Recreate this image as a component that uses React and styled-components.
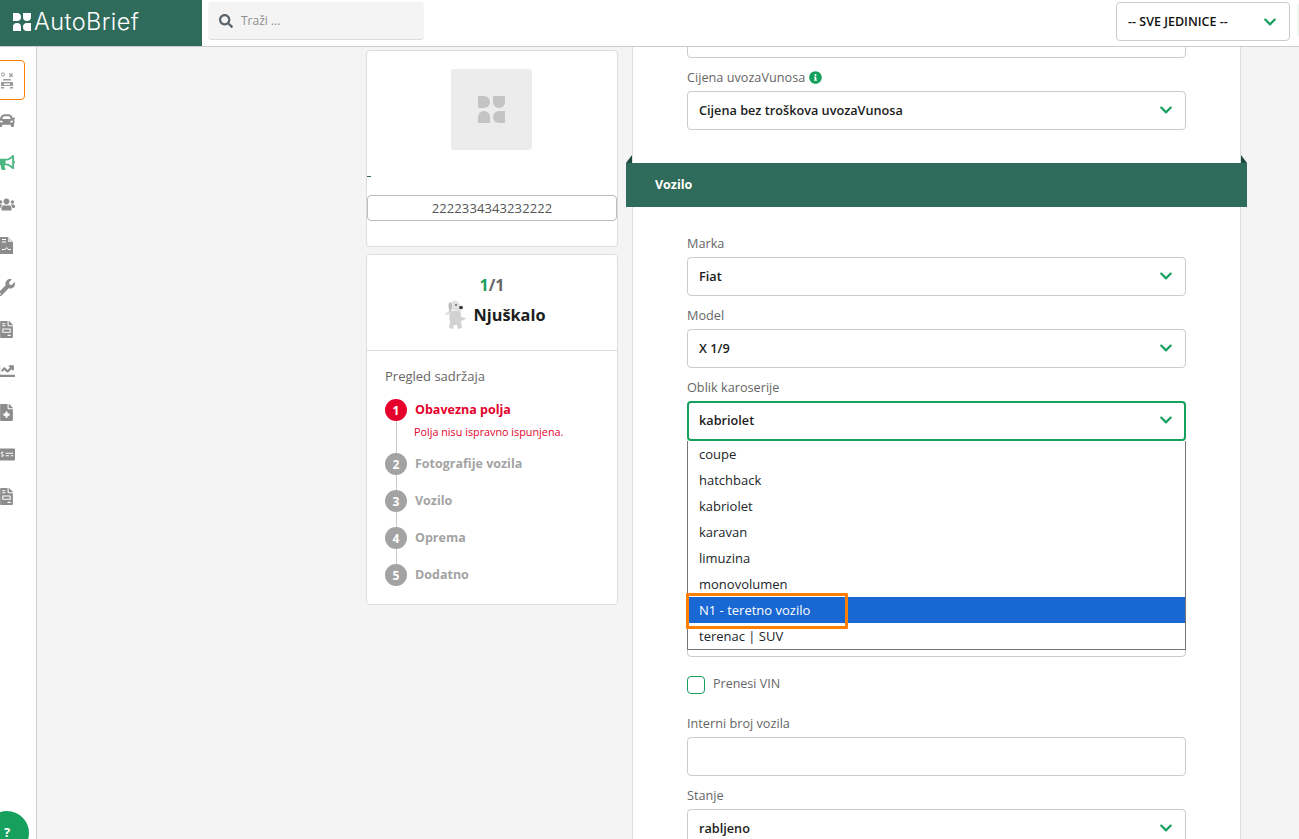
import React from 'react'
import styled, { createGlobalStyle } from 'styled-components'
import {
  FaSearch, FaChevronDown, FaCar, FaBullhorn, FaUsers, FaWrench,
  FaFileInvoice, FaChartLine, FaFileMedical, FaMoneyCheckAlt, FaInfoCircle,
} from 'react-icons/fa'

const GREEN = '#2f6b5a'
const ACCENT = '#16a05d'

const Global = createGlobalStyle`
  html, body { margin: 0; padding: 0; height: 100%; overflow: hidden; }
  body { font-family: "Open Sans", "Liberation Sans", sans-serif; font-size: 13px; color: #212529; background: #f4f4f4; }
  * { box-sizing: border-box; }
`

const Page = styled.div`
  width: 1299px;
  height: 839px;
  display: flex;
  flex-direction: column;
  overflow: hidden;
  position: relative;
`

const Header = styled.header`
  height: 47px;
  flex: none;
  display: flex;
  background: #fff;
  border-bottom: 1px solid #ccc;
`

const Logo = styled.div`
  width: 202px;
  padding: 0 0 3px 13px;
  display: flex;
  align-items: center;
  gap: 3px;
  background: ${GREEN};
  color: #fff;
  font-family: Inter, sans-serif;
  font-size: 23.5px;
  font-weight: 300;
  letter-spacing: 0.4px;
  line-height: 1;
`

const Search = styled.div`
  width: 216px;
  height: 38px;
  margin: 2px 0 0 6px;
  padding-left: 11px;
  display: flex;
  align-items: center;
  gap: 8px;
  background: #f4f4f4;
  border-bottom: 1px solid #ddd;
  border-radius: 4px;
  color: #8f8f8f;
  font-size: 12px;
  svg { color: #59636b; font-size: 14px; }
`

const Units = styled.div`
  width: 174px;
  height: 39px;
  margin: 2px 0 0 auto;
  padding: 0 12px 0 11px;
  display: flex;
  align-items: center;
  justify-content: space-between;
  border: 1px solid #ccc;
  border-radius: 4px;
  font-size: 12.5px;
  font-weight: 600;
  color: #111;
  svg { color: ${ACCENT}; font-size: 14px; }
`

const Sliver = styled.div`
  width: 2px;
  height: 32px;
  margin: 4px 0 0 7px;
  background: #eef7f1;
`

const Body = styled.div`
  flex: 1;
  min-height: 0;
  display: flex;
`

const Sidebar = styled.nav`
  width: 37px;
  flex: none;
  padding-top: 12px;
  background: #fff;
  border-right: 1px solid #ccc;
  overflow: hidden;
`

const NavItem = styled.div`
  width: 37px;
  height: 41.7px;
  margin-left: -12px;
  display: flex;
  align-items: center;
  justify-content: center;
  border-radius: 4px;
  color: ${p => (p.$green ? '#4cb782' : '#8c8c8c')};
  font-size: 17px;
  ${p => p.$active && `
    height: 40px;
    margin-top: 1px;
    border: 1px solid #ff8000;
  `}
`

const Main = styled.main`
  flex: 1;
  min-width: 0;
  padding-left: 329px;
  display: flex;
  gap: 14px;
  overflow: hidden;
`

const LeftColumn = styled.div`
  width: 252px;
  flex: none;
  padding-top: 3px;
  display: flex;
  flex-direction: column;
  gap: 7px;
`

const Card = styled.section`
  background: #fff;
  border: 1px solid #ddd;
  border-radius: 4px;
`

const PhotoCard = styled(Card)`
  height: 197px;
  padding-top: 18px;
`

const Photo = styled.div`
  width: 81px;
  height: 81px;
  margin-left: 84px;
  display: flex;
  align-items: center;
  justify-content: center;
  background: #ececec;
  border-radius: 3px;
`

const Dash = styled.div`
  width: 4px;
  height: 1px;
  margin-top: 26px;
  background: ${GREEN};
`

const CodeBox = styled.div`
  height: 26px;
  margin-top: 18px;
  display: flex;
  align-items: center;
  justify-content: center;
  border: 1px solid #bbb;
  border-radius: 4px;
  color: #555;
  font-size: 13px;
  letter-spacing: 0.1px;
`

const StatusCard = styled(Card)`
  height: 351px;
`

const Portal = styled.div`
  height: 96px;
  padding-top: 19px;
  border-bottom: 1px solid #ddd;
  display: flex;
  flex-direction: column;
  align-items: center;
`

const Count = styled.div`
  font-size: 16px;
  font-weight: 700;
  line-height: 22px;
  color: #666;
  b { color: ${ACCENT}; font-weight: 700; }
`

const PortalName = styled.div`
  margin: 4px 0 0 5px;
  display: flex;
  align-items: center;
  gap: 8px;
  font-size: 16.3px;
  font-weight: 700;
  color: #1c1c1c;
`

const Contents = styled.div`
  padding: 16px 18px 0;
`

const ContentsTitle = styled.div`
  margin-bottom: 13px;
  font-size: 13px;
  line-height: 19px;
  color: #666;
`

const Step = styled.div`
  position: relative;
  min-height: 37px;
  padding-left: 30px;
  &:not(:last-child)::before {
    content: "";
    position: absolute;
    left: 10.5px;
    top: 20px;
    bottom: -2px;
    width: 1px;
    background: #ccc;
  }
`

const StepNumber = styled.span`
  position: absolute;
  left: 0;
  top: 0;
  width: 22px;
  height: 22px;
  display: flex;
  align-items: center;
  justify-content: center;
  border-radius: 50%;
  background: ${p => (p.$error ? '#e4002b' : '#a3a3a3')};
  color: #fff;
  font-size: 12px;
  font-weight: 700;
`

const StepTitle = styled.div`
  padding-top: 1px;
  font-size: 12.5px;
  font-weight: 700;
  line-height: 20px;
  color: ${p => (p.$error ? '#e4002b' : '#a3a3a3')};
`

const StepError = styled.div`
  margin: 4px 0 0 -1px;
  padding-bottom: 14px;
  font-size: 10.8px;
  line-height: 15px;
  color: #e4002b;
`

const Panel = styled.section`
  width: 609px;
  flex: none;
  padding-bottom: 20px;
  background: #fff;
  border-left: 1px solid #ddd;
  border-right: 1px solid #ddd;
`

const Fields = styled.div`
  padding: 0 54px;
  ${p => p.$top && 'padding-top: 26px;'}
`

const Field = styled.div`
  position: relative;
  margin-bottom: 9px;
  ${p => p.$clipped && 'margin-top: -28px;'}
`

const Label = styled.label`
  height: 20px;
  margin-bottom: 4px;
  display: flex;
  align-items: center;
  gap: 4px;
  font-size: 12.7px;
  color: #666;
  svg { color: ${ACCENT}; font-size: 13px; }
`

const Control = styled.div`
  height: ${p => (p.$focus ? 40 : 39)}px;
  padding: 0 ${p => (p.$focus ? 11 : 12)}px ${p => (p.$focus ? 2 : 1)}px ${p => (p.$focus ? 10 : 11)}px;
  display: flex;
  align-items: center;
  justify-content: space-between;
  background: #fff;
  border: ${p => (p.$focus ? 2 : 1)}px solid ${p => (p.$focus ? ACCENT : '#ccc')};
  border-radius: 4px;
  font-size: 12.7px;
  font-weight: 600;
  color: #1c1c1c;
  svg { color: ${ACCENT}; font-size: 14px; }
`

const Options = styled.ul`
  position: absolute;
  z-index: 2;
  top: 64px;
  left: 0;
  right: 0;
  height: 209px;
  margin: 0;
  padding: 0;
  list-style: none;
  background: #fff;
  border: 1px solid #767676;
  border-top: none;
`

const Option = styled.li`
  position: relative;
  height: 26px;
  padding-left: 11px;
  line-height: 26px;
  font-size: 13px;
  ${p => p.$selected && 'background: #1967d2; color: #fff;'}
`

const Marker = styled.span`
  position: absolute;
  left: -2px;
  top: -4px;
  width: 162px;
  height: 36px;
  border: 3px solid #ff8000;
  border-radius: 1px;
`

const CheckRow = styled.div`
  height: 18px;
  margin: 19px 0;
  display: flex;
  align-items: center;
  gap: 8px;
  font-size: 12.5px;
  color: #666;
  span + span { padding-bottom: 3px; }
`

const CheckBox = styled.span`
  width: 18px;
  height: 18px;
  border: 1px solid ${ACCENT};
  border-radius: 4px;
`

const Band = styled.div`
  position: relative;
  height: 44px;
  margin: 33px -7px 0;
  padding: 0 0 2px 29px;
  display: flex;
  align-items: center;
  background: ${GREEN};
  color: #fff;
  font-size: 12.5px;
  font-weight: 700;
  &::before, &::after {
    content: "";
    position: absolute;
    top: -8px;
    border-bottom: 8px solid #1f4a3e;
  }
  &::before { left: 0; border-left: 6px solid transparent; }
  &::after { right: 0; border-right: 6px solid transparent; }
`

const Help = styled.div`
  position: absolute;
  left: -15px;
  bottom: -16px;
  width: 44px;
  height: 44px;
  padding-top: 15px;
  border-radius: 50%;
  background: ${ACCENT};
  color: #fff;
  text-align: center;
  span {
    display: block;
    font-size: 13px;
    font-weight: 700;
    line-height: 12px;
  }
`

function BriefMark({ size = 18, color = '#fff' }) {
  return (
    <svg width={size} height={size} viewBox="0 0 18 18" fill={color}>
      <path d="M0 0h4a4 4 0 0 1 0 8H0z" />
      <path d="M10 0h8v4a4 4 0 0 1-8 0z" />
      <path d="M0 18v-4a4 4 0 0 1 8 0v4z" />
      <path d="M18 10h-4a4 4 0 0 0 0 8h4z" />
    </svg>
  )
}

function CarTools() {
  return (
    <svg width="14" height="17" viewBox="0 0 14 17" fill="#9a9a9a">
      <circle cx="3" cy="2.500" r="1.600" fill="none" stroke="#9a9a9a" />
      <path d="M9 4.500 12 1l1 1-3 3.500zM9.500 1l3.500 3.500-.8.800L8.700 1.800z" />
      <path d="M3.500 7h7l1 1.500h-9z" />
      <path d="M1 10h12v4H1zM1 15h3v1.500H1zM10 15h3v1.500h-3z" />
      <rect x="4" y="11.500" width="6" height="1.500" fill="#fff" />
    </svg>
  )
}

function FilePulse() {
  return (
    <svg width="13" height="17" viewBox="0 0 13 17" fill="#8c8c8c">
      <path d="M0 0h8l5 5v12H0z" />
      <path d="M8 0v5h5z" fill="#d8d8d8" />
      <path d="M2 2.500h4M2 5h4" stroke="#fff" strokeWidth="1" />
      <path d="M2 12.500h3l1.500-2 1.500 2h3" stroke="#fff" strokeWidth="1" fill="none" />
    </svg>
  )
}

function Mascot() {
  return (
    <svg width="22" height="30" viewBox="0 0 22 30">
      <path d="M7 11c-2 4-2 8-1 11l-1 6 4 1 1-4h3l1 4 4-1-1-7c1-1 4-1 5-3l-5-1c0-2 0-4-1-6z" fill="#d2d2d2" />
      <path d="M6 10c-2 2-4 3-5 4l1 1c2 0 4-1 5-2z" fill="#dcdcdc" />
      <path d="M7 3c2-3 5-3 7-1 1 2 3 3 5 4 1 2-1 5-3 5-3 1-7 0-9-3-1-1-1-4 0-5z" fill="#e2e2e2" />
      <path d="M6 2C4 3 4 8 6 12c2-1 2-5 2-8z" fill="#bcbcbc" />
      <circle cx="12" cy="5" r=".9" fill="#555" />
      <ellipse cx="17" cy="7.500" rx="2" ry="1.500" fill="#333" />
    </svg>
  )
}

const navIcons = [
  { icon: <CarTools />, active: true },
  { icon: <FaCar /> },
  { icon: <FaBullhorn />, green: true },
  { icon: <FaUsers /> },
  { icon: <FilePulse /> },
  { icon: <FaWrench /> },
  { icon: <FaFileInvoice /> },
  { icon: <FaChartLine /> },
  { icon: <FaFileMedical /> },
  { icon: <FaMoneyCheckAlt /> },
  { icon: <FaFileInvoice /> },
]

const steps = ['Fotografije vozila', 'Vozilo', 'Oprema', 'Dodatno']

const bodyTypes = ['coupe', 'hatchback', 'kabriolet', 'karavan', 'limuzina', 'monovolumen', 'N1 - teretno vozilo', 'terenac | SUV']

export default function App() {
  return (
    <Page>
      <Global />
      <Header>
        <Logo><BriefMark />AutoBrief</Logo>
        <Search><FaSearch />Traži ...</Search>
        <Units>-- SVE JEDINICE --<FaChevronDown /></Units>
        <Sliver />
      </Header>
      <Body>
        <Sidebar>
          {navIcons.map((n, i) => (
            <NavItem key={i} $active={n.active} $green={n.green}>{n.icon}</NavItem>
          ))}
        </Sidebar>
        <Main>
          <LeftColumn>
            <PhotoCard>
              <Photo><BriefMark size={27} color="#c4c4c4" /></Photo>
              <Dash />
              <CodeBox>2222334343232222</CodeBox>
            </PhotoCard>
            <StatusCard>
              <Portal>
                <Count><b>1</b>/1</Count>
                <PortalName><Mascot />Njuškalo</PortalName>
              </Portal>
              <Contents>
                <ContentsTitle>Pregled sadržaja</ContentsTitle>
                <Step>
                  <StepNumber $error>1</StepNumber>
                  <StepTitle $error>Obavezna polja</StepTitle>
                  <StepError>Polja nisu ispravno ispunjena.</StepError>
                </Step>
                {steps.map((s, i) => (
                  <Step key={s}>
                    <StepNumber>{i + 2}</StepNumber>
                    <StepTitle>{s}</StepTitle>
                  </Step>
                ))}
              </Contents>
            </StatusCard>
          </LeftColumn>
          <Panel>
            <Fields>
              <Field $clipped><Control /></Field>
              <Field>
                <Label>Cijena uvozaVunosa<FaInfoCircle /></Label>
                <Control>Cijena bez troškova uvozaVunosa<FaChevronDown /></Control>
              </Field>
            </Fields>
            <Band>Vozilo</Band>
            <Fields $top>
              <Field>
                <Label>Marka</Label>
                <Control>Fiat<FaChevronDown /></Control>
              </Field>
              <Field>
                <Label>Model</Label>
                <Control>X 1/9<FaChevronDown /></Control>
              </Field>
              <Field>
                <Label>Oblik karoserije</Label>
                <Control $focus>kabriolet<FaChevronDown /></Control>
                <Options>
                  {bodyTypes.map(t => (
                    <Option key={t} $selected={t.startsWith('N1')}>
                      {t}
                      {t.startsWith('N1') && <Marker />}
                    </Option>
                  ))}
                </Options>
              </Field>
              <Field><Label /><Control /></Field>
              <Field><Label /><Control /></Field>
              <Field><Label /><Control /></Field>
              <CheckRow><CheckBox /><span>Prenesi VIN</span></CheckRow>
              <Field>
                <Label>Interni broj vozila</Label>
                <Control />
              </Field>
              <Field>
                <Label>Stanje</Label>
                <Control>rabljeno<FaChevronDown /></Control>
              </Field>
            </Fields>
          </Panel>
        </Main>
      </Body>
      <Help><span>?</span></Help>
    </Page>
  )
}
